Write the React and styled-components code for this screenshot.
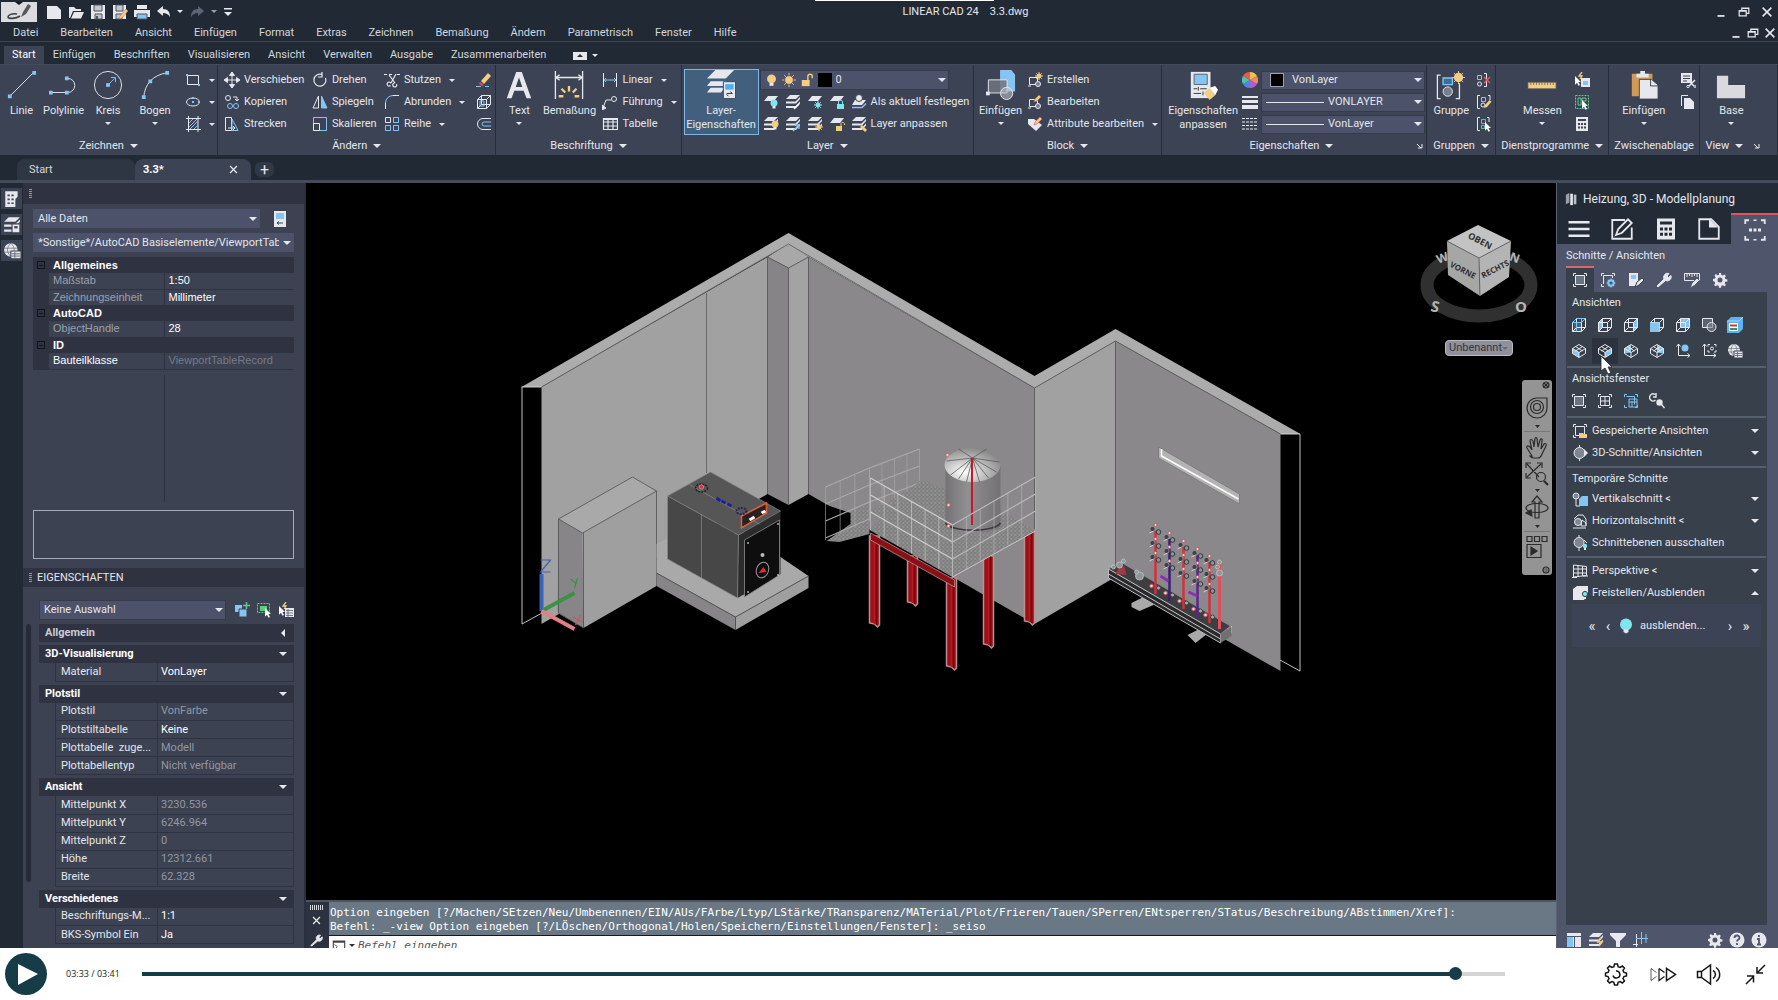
import React from "react"
import styled, {createGlobalStyle} from "styled-components"

const
  W = "#e6e8ed",
  B = "#86c5f2",
  Y = "#f3cd82",
  C = "#7fe6ee",
  G = "#63c98a",
  R = "#e0525f"

const Global = createGlobalStyle`
  * { box-sizing: border-box; }
  body {
    margin: 0;
    background: #212a34;
    color: #e3e6ec;
    font: 11px/14px Roboto, "Open Sans", sans-serif;
  }
  button, select, input { font: inherit; color: inherit; margin: 0; }
  button { background: none; border: 0; padding: 0; white-space: nowrap; }
  a { color: inherit; text-decoration: none; }
  svg { display: block; flex: none; }
`

/* ---------- icons, all on a 16 grid ---------- */

const
  layers = <path d="M5 1h10l-4 4H1zM1 7.500h9.500L15 3v2l-4 4.500H1zM1 12h9.500L15 7.500v2L11 14H1z" fill={W} stroke="none" />,
  sheet = <path d="M5 2h10l-4 5H1z" fill={W} stroke="none" />,
  bulb = (x, y, c) => <g stroke="none"><circle cx={x} cy={y} r="3.500" fill={c} /><path d={`M${x - 1.500} ${y + 3}h3v2.500h-3z`} fill={W} /></g>,
  sun = (x, y, r, c) => <g stroke={c}><circle cx={x} cy={y} r={r * .5} fill={c} /><path d={`M${x} ${y - r}v${2 * r}M${x - r} ${y}h${2 * r}M${x - r * .7} ${y - r * .7}l${r * 1.4} ${r * 1.4}M${x - r * .7} ${y + r * .7}l${r * 1.4} ${-r * 1.4}`} /></g>,
  pointer = (x, y) => <path d={`M${x} ${y}l6 6h-2.500l1.500 3-1.500.700-1.500-3-2 2z`} fill="#fff" stroke="none" />,
  pencil = <path d="M8 14l1-3 4.500-5 2 1.800L11 13z" fill={Y} stroke="none" />,
  cube = "M1.500 5.500h9v9h-9zM5.500 1.500h9v9M1.500 5.500l4-4M10.500 5.500l4-4M10.500 14.500l4-4M5.500 1.500v9h9M5.500 10.500l-4 4",
  iso = "M8 1.500l6.500 4v5L8 14.500l-6.500-4v-5zM1.500 5.500L8 9.500l6.500-4M8 9.500v5M4.500 3.500l7 4.500M11.500 3.500l-7 4.500",
  frame = "M1.500 4v-2.500H4M12 1.500h2.500V4M14.500 12v2.500H12M4 14.500H1.500V12",
  gear = <path d="M7 1h2l.4 2 1.400.6 1.700-1.100 1.400 1.400-1.100 1.700.6 1.400 2 .4v2l-2 .4-.6 1.400 1.100 1.700-1.400 1.400-1.700-1.100-1.400.6-.4 2H7l-.4-2-1.400-.6-1.700 1.100-1.400-1.400 1.100-1.700-.6-1.400L1 9V7l2-.4.6-1.400-1.100-1.700 1.400-1.400 1.700 1.100L7 3zM8 5.500a2.500 2.500 0 100 5 2.500 2.500 0 000-5z" fill={W} fillRule="evenodd" stroke="none" />

const art = {
  // quick access
  fileNew: <path d="M1 2h10l4 4v9H1z" fill={W} stroke="none" />,
  open: <path d="M1 3h5l2 2h5v2H5l-3 7H1zM6 8h10l-3 6.500H3z" fill={W} stroke="none" />,
  save: <><path d="M1 1h14v14H1z" fill={W} stroke="none" /><path d="M4 1h8v6H4zM5 10h7v5H5z" fill="#c3c6cd" stroke="#4b5361" /><path d="M6 12h2v3H6z" fill="#4b5361" stroke="none" /></>,
  saveAs: <><path d="M1 1h13v14H1z" fill={W} stroke="none" /><path d="M4 1h7v6H4zM4 10h6v5H4z" fill="#c3c6cd" stroke="#4b5361" /><path d="M7 15l1-3 6-7 2 2-6 7z" fill={Y} stroke={R} strokeWidth=".5" /></>,
  print: <><path d="M3 1h10v4H3zM0 6h16v7H0z" fill={W} stroke="none" /><path d="M3 10h10v5H3z" fill={B} stroke="#4b5361" /></>,
  undo: <path d="M7 2v3c5 0 7 3 7 8-2-3-4-4-7-4v3L1 7z" fill={W} stroke="none" />,
  redo: <path d="M9 2v3c-5 0-7 3-7 8 2-3 4-4 7-4v3l6-5z" fill="#5d6573" stroke="none" />,
  more: <path d="M4 4h8v1.500H4zM4 8h8l-4 4z" fill={W} stroke="none" />,
  min: <path d="M4 12.500h8" strokeWidth="2" />,
  restore: <path d="M5.500 6V3.500h8v6H11M2.500 6.500h8v6h-8zM5.500 4h8M2.500 7h8" strokeWidth="1.400" />,
  close: <path d="M3 3l10 10M13 3L3 13" strokeWidth="1.800" />,
  // draw
  rect: <><path d="M2.500 3.500h11v9h-11z" /><path d="M1 2h2v2H1zM13 12h2v2h-2z" fill={B} stroke="none" /></>,
  ellipse: <><ellipse cx="8" cy="8" rx="6.500" ry="4" /><path d="M7 7h2v2H7zM7 3h2v2H7zM13 7h2v2h-2z" fill={B} stroke="none" /></>,
  hatch: <><path d="M3.500 0v16M13 0v16M1 2.500h15M1 13.500h15" /><path d="M4 7l4-4M4 11l8-8M5 13l8-8M9 13l4-4" stroke={B} /></>,
  // modify
  move: <path d="M8 1v14M1 8h14M8 0L5.500 3.500h5zM8 16l-2.500-3.500h5zM0 8l3.500-2.500v5zM16 8l-3.500-2.500v5z" fill={W} />,
  copy: <><circle cx="4" cy="4" r="2.500" /><path d="M9 3h4v3M11 5l2 2 2-2" /><circle cx="6" cy="12" r="2.500" stroke={B} /><circle cx="12" cy="12" r="2.500" stroke={B} /></>,
  stretch: <><path d="M1.500 1.500h6v13h-6zM4 12h7M9 10l2 2-2 2" /><path d="M8 3l6 11.500H8z" stroke={B} /></>,
  rotate: <path d="M10 2.500A6 6 0 1013.500 6M10 0v5h-4" strokeWidth="1.200" />,
  mirror: <><path d="M6.500 2v12H1z" /><path d="M9.500 2v12H15z" fill={B} stroke={B} /></>,
  scale: <><path d="M1.500 1.500h13v13h-13z" stroke={B} /><path d="M1.500 7.500h6v7h-6z" /></>,
  trim: <path d="M0 2.500h3M5 2.500h3M13 2.500h3M5 3l6 8M12 2l-5 9M10.500 11a2 2 0 102 1M7 11.500a2 2 0 10-.5 2" strokeWidth="1.200" />,
  fillet: <><path d="M1.500 15V9M9 1.500h6" /><path d="M1.500 9A7.500 7.500 0 019 1.500" stroke={B} /></>,
  array: <><path d="M1.500 1.500h5v5h-5z" /><path d="M9.500 1.500h5v5h-5zM1.500 9.500h5v5h-5zM9.500 9.500h5v5h-5z" stroke={B} /></>,
  erase: <><path d="M5 9l7-8 3 3-7 8z" fill={Y} stroke="none" /><path d="M4 10l4 3-2 1-3-2z" fill={R} stroke="none" /><path d="M0 14.500h5M9 14.500h4" stroke={B} /></>,
  explode: <><path d={cube} /><path d="M4 7h4v5H4z" stroke={B} /></>,
  offset: <><path d="M15 2.500H7a5.500 5.500 0 000 11h8" /><path d="M15 6H8a2 2 0 000 4h7" stroke={B} /></>,
  // annotate
  linear: <><path d="M1.500 1v14M14.500 1v14" /><path d="M2 8h12M4 6L2 8l2 2M12 6l2 2-2 2" stroke={B} /></>,
  leader: <><path d="M1 14l3-8h5" /><circle cx="12" cy="5" r="2.500" /><path d="M0 16v-5l4 3z" fill={W} /></>,
  table: <path d="M1.500 2.500h14v11h-14zM1.500 6h14M1.500 10h14M6 3v11M11 3v11M2 3.500h13" strokeWidth="1.200" />,
  // layers
  bulb: <g stroke="none"><circle cx="8" cy="6" r="5.500" fill={Y} /><path d="M5.500 11h5v3.500h-5z" fill={W} /></g>,
  sun: <>{sun(8, 8, 8, Y)}<circle cx="8" cy="8" r="5" fill={Y} stroke="#4b5269" /></>,
  unlock: <><path d="M2 8h9v7H2z" fill={Y} stroke="none" /><path d="M9 8V4a2.500 2.500 0 015 0v2" stroke={Y} strokeWidth="1.600" /></>,
  layOff: <>{sheet}{bulb(11, 9, C)}</>,
  layIso: <>{layers}<path d="M9 15l5-5" stroke="#fff" strokeWidth="1.500" /></>,
  layFreeze: <>{sheet}{sun(11, 11, 4, C)}</>,
  layLock: <>{sheet}<path d="M8 10h7v5H8z" fill={C} stroke="none" /><path d="M9.500 10V8a2 2 0 014 0v2" stroke={C} /></>,
  layCurrent: <><path d="M4 6h11l-4 5H1z" fill={W} stroke="none" /><path d="M1 13.500h10l4-4" stroke={B} strokeWidth="1.500" /><circle cx="8" cy="4" r="3.500" fill={W} stroke="#3c4354" /></>,
  layOn: <>{layers}{bulb(12, 8, Y)}</>,
  layUniso: <>{layers}<path d="M8 15l6-6M10 9h4v4" stroke={B} strokeWidth="1.300" /></>,
  layThaw: <>{layers}{sun(12, 11, 4, Y)}</>,
  layUnlock: <>{sheet}<path d="M7 10h6v5H7z" fill={Y} stroke="none" /><path d="M12 10V7.500a2 2 0 013.500 0V9" stroke={Y} /></>,
  layMatch: <>{layers}<path d="M9 11l2-2 5 5-2 2z" fill={Y} stroke="none" /></>,
  // blocks
  blkNew: <><path d="M2.500 5.500h8v7h-8zM1 14h3" /><circle cx="11" cy="12" r="2.500" fill="#777f8d" />{sun(12, 4, 4, Y)}</>,
  blkEdit: <><path d="M2.500 5.500h8v7h-8zM1 14h3" /><circle cx="11" cy="12" r="2.500" fill="#777f8d" /><path d="M7 8l1-3 4-4 2 2-4 4z" fill={Y} stroke={R} strokeWidth=".6" /></>,
  attEdit: <><path d="M1 3h6l8 6-6 6-8-7z" fill={W} stroke="none" /><path d="M7 9l1-3 5-5 2 2-5 5z" fill={Y} stroke={R} strokeWidth=".6" /></>,
  weight: <path d="M0 2h16v2H0zM0 6h16v3H0zM0 11h16v4H0z" fill={W} stroke="none" />,
  linetype: <path d="M0 2.500h16M0 6h16M0 9.500h16M0 13h16" strokeDasharray="3 1" />,
  wheel: <g stroke="none"><path d="M8 8V0a8 8 0 017 4z" fill="#f2c14e" /><path d="M8 8l7-4a8 8 0 010 8z" fill="#f08a5a" /><path d="M8 8l7 4a8 8 0 01-7 4z" fill="#b45ad6" /><path d="M8 8v8a8 8 0 01-7-4z" fill="#4f83e6" /><path d="M8 8l-7 4a8 8 0 010-8z" fill="#4bc6a4" /><path d="M8 8L1 4a8 8 0 017-4z" fill="#e9594f" /></g>,
  // groups, utilities, clipboard
  ungroup: <><path d="M1.500 3.500h4v4h-4z" stroke={B} /><circle cx="3.500" cy="12" r="2" /><path d="M8 1.500h2.500v13H8" /><path d="M8 5l6 6M14 5l-6 6" stroke={R} strokeWidth="1.500" /></>,
  groupEdit: <><path d="M4 1.500H1.500v13H4M12 1.500h2V6" /><path d="M5.500 3.500h4v4h-4z" stroke={B} /><circle cx="7" cy="11" r="2" />{pencil}</>,
  groupSel: <><path d="M4 1.500H1.500v13H4M11 1.500h2V6" /><path d="M5.500 3.500h4v4h-4zM5.500 9.500h3v3h-3z" stroke={G} />{pointer(9, 6)}</>,
  quickSel: <><path d="M7 6h9v9H7z" fill={W} stroke="none" /><path d="M9 9h5v4H9z" fill={B} stroke="none" /><path d="M8 0L5 4h3L6 7" stroke={Y} strokeWidth="1.300" />{pointer(1, 4)}</>,
  quickProps: <><path d="M7 6h9v9H7z" fill={W} stroke="none" /><path d="M8 8.500h7M8 11h7M8 13.500h7M10 7v8" stroke="#59606d" strokeWidth=".8" /><path d="M8 0L5 4h3L6 7" stroke={Y} strokeWidth="1.300" />{pointer(1, 4)}</>,
  selAll: <><path d="M1.500 1.500h13v13h-13z" stroke={G} strokeDasharray="2 1" /><path d="M4 4h3v7h-3zM8 4h4v3h-4z" stroke={G} />{pointer(8, 6)}</>,
  calc: <path d="M2 1h12v14H2zM4 3v2h8V3zM4 7v2h2V7zM7 7v2h2V7zM10 7v2h2V7zM4 10.500v2h2v-2zM7 10.500v2h2v-2zM10 10.500v2h2v-2z" fill={W} fillRule="evenodd" stroke="none" />,
  cut: <><path d="M1 1h11v10H1z" fill={W} stroke="none" /><path d="M3 4h7M3 6.500h7M3 9h4" stroke="#3c4354" /><path d="M8 8l6 6M15 8l-6 6" strokeWidth="1.500" /><circle cx="8" cy="14.500" r="1.200" /><circle cx="15" cy="14.500" r="1" /></>,
  copyClip: <><path d="M1.500 12V1.500H8" /><path d="M4 4h6l4 4v7H4z" fill={W} stroke="none" /></>,
  // palettes
  building: <path d="M2 1h11v5l-2 2v7H2zM4 4v1.500h2V4zM7.500 4v1.500h2V4zM4 7.500V9h2V7.500zM7.500 7.500V9h2V7.500zM4 11v1.500h2V11zM7.500 11v1.500h2V11z" fill={W} fillRule="evenodd" stroke="none" />,
  layProps: <>{layers}<path d="M8 7h7v8H8z" fill={W} stroke="#3c4354" /><path d="M10 9h3v2h-3z" fill="#3c4354" stroke="none" /></>,
  globeProps: <><circle cx="7" cy="7" r="6" fill={W} stroke="none" /><path d="M1 5.500h12M1 9h12M7 1c-4 4-4 8 0 12M7 1c4 4 4 8 0 12" stroke="#59606d" strokeWidth=".6" /><path d="M7 8h9v7H7z" fill={W} stroke="#3c4354" /><path d="M8 10.500h7M8 12.500h7M10.500 9v5" stroke="#59606d" strokeWidth=".8" /></>,
  device: <><path d="M2 0h12v16H2z" fill={W} stroke="none" /><path d="M4 2h8v6H4z" fill={B} stroke="none" /><path d="M5 12h6M7 10.500L5 12l2 1.500" stroke="#3c4354" /></>,
  addSel: <><path d="M1 3h7v7H1z" fill={B} stroke="none" /><path d="M5 7h8v8H5z" fill={B} stroke="#3c4354" /><path d="M12.500 0v7M9 3.500h7" stroke={G} strokeWidth="1.500" /></>,
  pickSel: <><path d="M1.500 1.500h12v9h-12z" stroke={G} strokeDasharray="2 1" /><path d="M4 4h7v5H4z" fill={G} stroke="none" />{pointer(9, 6)}</>,
  // modelling palette
  burger: <path d="M1 3.500h14M1 8h14M1 12.500h14" strokeWidth="1.700" />,
  edit: <><path d="M10 2H1.500v12.500h13V7" strokeWidth="1.200" /><path d="M4 12l1.500-4L12 1.500l2.500 2.500L8 10.500z" strokeWidth="1.200" /></>,
  page: <><path d="M1.500 1.500h8l5 5v8h-13z" strokeWidth="1.200" /><path d="M8 1v6h6z" fill={W} stroke="none" /></>,
  dots: <><path d={frame} strokeWidth="1.200" /><path d="M7 1.500h2M7 14.500h2" /><path d="M4 7h2v2H4zM7 7h2v2H7zM10 7h2v2h-2z" fill={W} stroke="none" /></>,
  view: <><path d={frame} /><path d="M3.500 3.500h9v9h-9z" fill="#6a7380" /></>,
  viewGear: <><path d="M1.500 4v-2.500H4M12 1.500h2.500V4M4 14.500H1.500V12M3.500 12V3.500h9V6" /><circle cx="11" cy="11" r="2.800" stroke={B} strokeWidth="1.800" /><path d="M11 6.500v9M6.500 11h9M8 8l6 6M14 8l-6 6" stroke={B} strokeWidth="1.200" /><circle cx="11" cy="11" r="1.600" fill="#50566d" stroke="none" /></>,
  deviceEdit: <><path d="M1 1h9v13H1z" fill={W} stroke="none" /><path d="M3 3h5v4H3z" fill={B} stroke="none" /><path d="M7 15l2-5 5-4 2 2-5 5z" fill={W} stroke="#37404b" /></>,
  wrench: <path d="M2 15l-1-1 7-7a4 4 0 015-5.500l-2 2.500 1.500 1.500L15 3.500a4 4 0 01-5.500 5z" fill={W} stroke={W} />,
  ruler: <><path d="M.5 1.500h15v7H.500zM3 2v3M5.500 2v2M8 2v3M10.500 2v2M13 2v3" /><path d="M6 16l2-5 5-5 2.500 2.500-5 5z" fill={W} stroke="#50566d" /></>,
  gear,
  cubeTop: <><path d="M3 5.500h7v9H3z" fill={B} fillOpacity=".25" stroke="none" /><path d={cube} /><path d="M1.500 5.500h9l4-4h-9zM5.500 5.500v9M10.500 1.500v4" stroke={B} /></>,
  cubeLeft: <><path d="M1.500 5.500l4-4v9l-4 4z" fill={B} stroke="none" /><path d={cube} /></>,
  cubeRight: <><path d="M10.500 5.500l4-4v9l-4 4z" fill={B} stroke="none" /><path d={cube} /></>,
  cubeFront: <><path d={cube} /><path d="M1 5.500h9.500V15H1z" fill={B} stroke="none" /></>,
  cubeBack: <><path d="M5.500 1.500h9v9h-9z" fill={B} stroke="none" /><path d={cube} /></>,
  overlap: <><path d="M1.500 1.500h10v9h-10z" fill="#5b6572" /><circle cx="10.500" cy="10" r="4.500" fill="#7d8692" fillOpacity=".6" /></>,
  server: <><path d="M0 4l4-4h12v12l-4 4H0z" fill="#5cb3f0" stroke="none" /><path d="M0 4h12l4-4" stroke="#c9e6fb" strokeWidth=".7" /><path d="M2 6h9v8H2z" fill="#fff" stroke="none" /><path d="M3 7.500h7v2H3z" fill="#cf3345" stroke="none" /><path d="M3 11h7v2H3z" fill="#2f9b57" stroke="none" /></>,
  isoSW: <><path d="M1.500 5.500L8 9.500v5l-6.500-4z" fill={B} stroke="none" /><path d={iso} /></>,
  isoSE: <><path d="M8 9.500l6.500-4v5L8 14.500z" fill={B} stroke="none" /><path d={iso} /></>,
  isoNE: <><path d="M1.500 5.500L8 1.500v8l-6.500 1z" fill={B} stroke="none" /><path d={iso} /></>,
  isoNW: <><path d="M8 1.500l6.500 4v5L8 9.500z" fill={B} stroke="none" /><path d={iso} /></>,
  axisGlobe: <><path d="M3.500 1v11.500H15M1.500 3.500L3.500 1l2 2.500M12.500 10.500l2.500 2-2.500 2" /><circle cx="10" cy="5" r="3.500" fill={B} stroke="none" /></>,
  axisView: <><path d="M3.500 1v11.500H15M1.500 3.500L3.500 1l2 2.500M12.500 10.500l2.500 2-2.500 2M7 3.500V1.500h2M13 1.500h2v2M15 7v2h-2M9 9H7V7" /><circle cx="11" cy="5.500" r="1.500" /></>,
  viewGrid: <><path d={frame} /><path d="M3.500 3.500h9v9h-9zM3.500 8h9M8 3.500v9" /></>,
  viewBlue: <><path d={frame} stroke={B} /><path d="M3.500 3.500h8v8M6 6h8v8H6zM6 9h8M9 8v6" stroke={B} /></>,
  orbit: <><path d="M6 1.500a3.500 3.500 0 10.500 5.500M7 0v4H4" strokeWidth="1.400" /><circle cx="10.500" cy="9.500" r="3.200" fill={W} stroke="none" /><path d="M12 11l3.500 4" strokeWidth="1.400" /></>,
  saved: <><path d={frame} /><path d="M3.500 3.500h9v9h-9z" /><path d="M7 10h4l1 1h3l-1 4H7z" fill={Y} stroke="none" /></>,
  section: <><path d="M7.500 0v16" /><circle cx="7.500" cy="8" r="5.500" fill="#7d8692" /><path d="M12 4l4 4-4 4z" fill={W} stroke="none" /></>,
  vsec: <><path d="M4 8v7h4" /><path d="M7 8l3-3h6v10H7z" fill={B} stroke="none" /><circle cx="4" cy="5" r="3" fill="#7d8692" /></>,
  hsec: <><path d="M2 6l4-4h5l3 4v6M1 15h13" /><circle cx="6" cy="9" r="3.500" fill="#7d8692" /><path d="M10 7l4 3v3H9z" /></>,
  secOff: <><circle cx="7" cy="7.500" r="5" fill="#7d8692" /><path d="M7 0v2M7 13v3M12 5l3 3" /><circle cx="13" cy="11" r="2.200" fill={C} stroke="none" /><path d="M12 13h2v2h-2z" fill={W} stroke="none" /></>,
  persp: <path d="M1.500 2l13 1.500v9L1.500 14zM0 14.500h5M11 13h5M6 2.500v11M10.500 3v10M1.500 6h13M1.500 10h13" />,
  isolate: <><path d="M1 4l4-3h11v8l-4 6H1z" fill={W} stroke="none" /><circle cx="13" cy="9" r="2.600" fill={C} stroke="#37404b" /><path d="M12 12h2v2h-2z" fill={W} stroke="none" /></>,
  cyanBulb: <g stroke="none"><circle cx="8" cy="6.500" r="6" fill={C} /><path d="M5.500 11.500h5V14l-2.500 1.500L5.500 14z" fill={W} /></g>,
  panes: <><path d="M1 1h14v14H1z" fill={W} stroke="none" /><path d="M1 4.500h14M8.500 5v10" stroke="#50566d" /><path d="M1 5h6v10H1z" fill={B} stroke="none" /></>,
  layFlash: <>{layers}<path d="M13 6l-3 4h4l-3 4" stroke={Y} strokeWidth="1.500" /></>,
  funnel: <path d="M0 1h16v2l-6 6v6H6V9L0 3z" fill={W} stroke="none" />,
  grid: <><path d="M4.500 2v13M1 12.500h5" /><path d="M4 6.500h12M9.500 0v12M14 2v9" stroke={B} /></>,
  help: <><circle cx="8" cy="8" r="7.500" fill={W} stroke="none" /><path d="M5.500 6a2.500 2.500 0 115 0c0 1.500-2.500 1.500-2.500 3.500M8 11v2" stroke="#50566d" strokeWidth="1.800" /></>,
  info: <><circle cx="8" cy="8" r="7.500" fill={W} stroke="none" /><path d="M8 3v2M6 7h2v5M6 12.500h4" stroke="#50566d" strokeWidth="1.800" /></>,
  radiator: <><path d="M1 3l4-2v11l-4 2z" fill="#9aa1ad" stroke="none" /><path d="M6 2h3v13H6z" fill={W} stroke="none" /><path d="M10 3h3v11h-3z" fill="#b9bec8" stroke="none" /></>,
  terminal: <><path d="M1.500 2.500h13v12h-13zM1.500 3.500h13" stroke="#444" strokeWidth="1.300" /><path d="M3 6l3 3-3 3M8 12h4" stroke="#444" /></>,
}

const Icon = ({name, size = 16}) =>
  <svg width={size} height={size} viewBox="0 0 16 16" fill="none" stroke={W} aria-hidden="true">{art[name]}</svg>

const bigArt = {
  line: <><path d="M3 28L29 2" /><path d="M1 26h4v4H1zM27 1h4v4h-4z" fill={B} stroke="none" /></>,
  polyline: <><path d="M2 24h18a7.500 7.500 0 000-15" /><path d="M0 22h4v4H0zM17 22h4v4h-4zM17 7h4v4h-4z" fill={B} stroke="none" /></>,
  circle: <><circle cx="16" cy="16" r="14.500" /><path d="M16 16l7-7M19 8h5v5" stroke={B} /><path d="M14 14h4v4h-4z" fill={B} stroke="none" /></>,
  arc: <><path d="M4 29C5 15 14 5 29 3" /><path d="M2 27h4v4H2zM9 10h4v4H9zM27 1h4v4h-4z" fill={B} stroke="none" /></>,
  text: <path d="M13 2h6l10 28h-5l-3-8H11l-3 8H3zM12.500 18h7L16 8z" fill={W} fillRule="evenodd" stroke="none" />,
  dim: <><path d="M1.500 1v30M30.500 1v30M2 8h28M6 5L2 8l4 3M26 5l4 3-4 3" strokeWidth="1.400" /><path d="M5 28h5M27 28h-5M8 20l4 4M24 20l-4 4M16 17v6" stroke={Y} strokeWidth="2.500" /></>,
  layerProps: <><path d="M10 0h20l-9 9H1zM5 12l-4 5h17l4-5zM5 19l-4 5h15l4-5z" fill={W} stroke="none" /><path d="M18.500 12.500h13v18h-13z" fill={W} stroke="#3c4354" /><path d="M20.500 15h9v6h-9z" fill="#4fb0ee" stroke="none" /><path d="M22 25h6M26 23l2 2M24 28l-2-2" stroke="#222" /></>,
  insert: <><path d="M15 0h12l4 5v18H15z" fill={B} stroke="none" /><path d="M2.500 10.500h20v14h-20z" fill="#6e7480" fillOpacity=".85" /><circle cx="22" cy="25" r="6.500" fill="#b9bdc6" fillOpacity=".6" /><path d="M0 23h4v4H0z" fill={W} stroke="none" /></>,
  match: <><path d="M3 2h21v28H3z" fill={W} stroke="none" /><path d="M6.500 4.500h14v11h-14z" fill={B} stroke="#59606d" /><path d="M6 20h4M13 20h7M11 18v4M6 25h8M16 23v4" stroke="#333" /><path d="M17 24l7-5 5 8-6 5z" fill={Y} stroke="none" /><path d="M23 19l6-2 3 4-3 6z" fill="#fff" stroke="none" /></>,
  group: <><path d="M5 5.500H1.500v25H5M21 30.500h4V14" strokeWidth="1.400" /><path d="M7.500 8.500h10v7h-10z" stroke={B} fill="#3d6c94" strokeWidth="1.400" /><circle cx="12.500" cy="23" r="5" fill="#777f8d" />{sun(24, 8, 7, Y)}<circle cx="24" cy="8" r="5" fill={Y} stroke="none" /></>,
  measure: <path d="M1 13h30v7H1zM4 13v3M7 13v3M10 13v3M13 13v3M16 13v3M19 13v3M22 13v3M25 13v3M28 13v3" fill={Y} stroke="#5d5a55" strokeWidth=".8" />,
  paste: <><path d="M3 4h22v24H3z" fill="#d49a55" stroke="none" /><path d="M8 4h4V1h5v3h4v4H8z" fill={W} stroke="none" /><path d="M11 10h13l7 6v15H11z" fill={W} stroke="#3c4354" /><path d="M23 10v7h8" stroke="#3c4354" /></>,
  base: <path d="M1 6h12v10h18v14H1z" fill="#d9d9df" stroke="none" />,
}
const BigIcon = ({name}) =>
  <svg width="30" height="30" viewBox="0 0 32 32" fill="none" stroke={W} aria-hidden="true">{bigArt[name]}</svg>

/* ---------- shared parts ---------- */

const
  Shell = styled.div`
    min-height: 100vh;
    display: flex;
    flex-direction: column;
    overflow: hidden;
  `,
  Caret = styled.i`
    flex: none;
    width: 0;
    height: 0;
    border: ${p => p.$size || 3}px solid transparent;
    border-bottom-width: 0;
    border-top-color: ${p => p.$color || W};
    ${p => p.$up && `transform: rotate(180deg);`}
    ${p => p.$left && `transform: rotate(90deg);`}
  `,
  IconButton = styled.button`
    display: flex;
    align-items: center;
    justify-content: center;
    width: ${p => p.$w || 22}px;
    height: ${p => p.$h || 20}px;
  `,
  ComboBox = styled.label`
    display: flex;
    align-items: center;
    gap: 4px;
    min-width: 0;
    height: ${p => p.$h || 19}px;
    padding: 0 2px 0 4px;
    background: #4b5269;
    border: 1px solid ${p => p.$flat ? "#4b5269" : "#353b4b"};
    ${p => p.$grow && "flex: 1;"}
  `,
  Select = styled.select`
    appearance: none;
    flex: 1;
    min-width: 0;
    background: transparent;
    border: 0;
    padding: 0;
    outline: 0;
  `,
  Swatch = styled.span`
    flex: none;
    width: 14px;
    height: 14px;
    background: #000;
    border: 1px solid ${p => p.$ring || "#000"};
  `,
  Stroke = styled.span`
    flex: none;
    width: 58px;
    height: 1px;
    background: ${W};
  `

const Combo = ({label, value, children, ...rest}) => <ComboBox {...rest}>
  {children}
  <Select aria-label={label} defaultValue={value}><option>{value}</option></Select>
  <Caret $size={4} />
</ComboBox>

/* ---------- title, menu, tabs ---------- */

const
  TitleBar = styled.header`
    display: flex;
    align-items: center;
    height: 23px;
    background: linear-gradient(#fff, #fff) 51% 0 / 179px 1px no-repeat #212a34;
  `,
  Quick = styled.div`
    display: flex;
    align-items: center;
    width: 238px;
  `,
  Logo = styled.svg`
    margin: 0 6px 0 1px;
    background: #dcdcdf;
  `,
  Title = styled.h1`
    flex: 1;
    margin: 0;
    padding-right: 16px;
    font-size: 11px;
    font-weight: 400;
    text-align: center;
    white-space: pre;
  `,
  Controls = styled.div`
    display: flex;
    margin-left: auto;
  `,
  MenuBar = styled.nav`
    display: flex;
    align-items: center;
    gap: 22px;
    height: 19px;
    padding: 1px 0 0 13px;
    border-bottom: 1px solid #3b4450;
    color: #d3d6dd;
  `,
  Tabs = styled.nav`
    display: flex;
    align-items: flex-end;
    height: 22px;
    padding-left: 4px;
    color: #d3d6dd;
  `,
  Tab = styled.a`
    padding: 2px 8px;
    margin-right: ${p => p.$on ? 1 : 2}px;
    ${p => p.$on && "background: #3c4354; color: #fff;"}
  `,
  Toggle = styled.button`
    display: flex;
    align-items: center;
    gap: 5px;
    height: 17px;
    margin-left: 17px;
    & > span {
      display: flex;
      align-items: center;
      justify-content: center;
      width: 14px;
      height: 8px;
      background: ${W};
    }
  `,
  Docs = styled.nav`
    display: flex;
    align-items: flex-end;
    height: 25px;
    padding-left: 17px;
  `,
  Doc = styled.div`
    display: flex;
    align-items: center;
    justify-content: space-between;
    width: ${p => p.$on ? 116 : 118}px;
    height: 21px;
    padding: 0 ${p => p.$on ? 12 : 0}px 0 ${p => p.$on ? 8 : 12}px;
    border-radius: 8px 8px 0 0;
    background: ${p => p.$on ? "#3c4354" : "#2e3643"};
    color: ${p => p.$on ? "#fff" : "#d3d6dd"};
    font-weight: ${p => p.$on ? 700 : 400};
  `,
  NewDoc = styled.button`
    width: 19px;
    height: 15px;
    margin: 0 0 3px 4px;
    border-radius: 6px;
    background: #303846;
    font-size: 16px;
    line-height: 15px;
  `

const WindowControls = ({w}) => <Controls>
  <IconButton $w={w} aria-label="Minimieren"><Icon name="min" size={14} /></IconButton>
  <IconButton $w={w} aria-label="Wiederherstellen"><Icon name="restore" size={14} /></IconButton>
  <IconButton $w={w} aria-label="Schließen"><Icon name="close" size={14} /></IconButton>
</Controls>

const Top = () => <>
  <TitleBar>
    <Quick>
      <Logo width="36" height="20" viewBox="0 0 36 20" fill="none" stroke="#3c3f45">
        <path d="M14 0l4 3 4-3z" fill="#15191f" stroke="none" />
        <path d="M20 15l2-5 5-8 3 2-5 8z" fill="#55585f" stroke="none" />
        <path d="M16 12c-5-1-9 1-9 3s8 2 12-1" strokeWidth="1.600" />
      </Logo>
      {[["fileNew", "Neu"], ["open", "Öffnen"], ["save", "Speichern"], ["saveAs", "Speichern unter"], ["print", "Plotten"], ["undo", "Zurück"]].map(([i, l]) =>
        <IconButton key={i} aria-label={l}><Icon name={i} /></IconButton>)}
      <IconButton $w={10} aria-label="Zurück Liste"><Caret /></IconButton>
      <IconButton $w={24} aria-label="Wiederherstellen"><Icon name="redo" /></IconButton>
      <IconButton $w={10} aria-label="Wiederherstellen Liste"><Caret $color="#9aa1ad" /></IconButton>
      <IconButton $w={18} aria-label="Anpassen"><Icon name="more" /></IconButton>
    </Quick>
    <Title>{"LINEAR CAD 24    3.3.dwg"}</Title>
    <WindowControls w={23} />
  </TitleBar>
  <MenuBar>
    {["Datei", "Bearbeiten", "Ansicht", "Einfügen", "Format", "Extras", "Zeichnen", "Bemaßung", "Ändern", "Parametrisch", "Fenster", "Hilfe"].map(m =>
      <a key={m} href="#menu">{m}</a>)}
    <WindowControls w={17} />
  </MenuBar>
  <Tabs>
    {["Start", "Einfügen", "Beschriften", "Visualisieren", "Ansicht", "Verwalten", "Ausgabe", "Zusammenarbeiten"].map((t, i) =>
      <Tab key={t} href="#tab" $on={i === 0}>{t}</Tab>)}
    <Toggle aria-label="Multifunktionsleiste"><span><Caret $up $color="#212a34" /></span><Caret /></Toggle>
  </Tabs>
</>

/* ---------- ribbon ---------- */

const
  Ribbon = styled.section`
    display: flex;
    height: 91px;
    background: #3c4354;
    border-top: 1px solid #434b5c;
  `,
  Panel = styled.div`
    flex: ${p => p.$w} 1 0;
    min-width: 0;
    display: flex;
    flex-direction: column;
    border-right: 1px solid #272e3b;
  `,
  Body = styled.div`
    flex: 1;
    display: flex;
    padding: 4px 0 0 ${p => p.$pad || 4}px;
  `,
  PanelTitle = styled.button`
    display: flex;
    align-items: center;
    justify-content: ${p => p.$start ? "flex-start" : "center"};
    gap: 6px;
    height: 18px;
    padding: 0 5px;
  `,
  Big = styled.button`
    display: flex;
    flex-direction: column;
    align-items: center;
    gap: 4px;
    width: ${p => p.$w}px;
    height: 66px;
    padding-top: 1px;
    ${p => p.$on && "background: #42607e; outline: 1px solid #80b6e2; outline-offset: -1px;"}
  `,
  Label = styled.span`
    line-height: 14px;
    white-space: pre;
  `,
  Columns = styled.div`
    display: grid;
    grid-template-columns: ${p => p.$cols || "auto"};
    grid-auto-rows: 22px;
    align-content: start;
    padding-left: ${p => p.$pad || 0}px;
  `,
  Tool = styled.button`
    display: flex;
    align-items: center;
    gap: 4px;
    & > ${Caret} { margin-left: 4px; }
  `,
  Row = styled.div`
    display: flex;
    align-items: center;
    gap: 6px;
    padding-left: ${p => p.$pad || 0}px;
  `,
  Stack = styled.div`
    flex: 1;
    min-width: 0;
    display: grid;
    grid-auto-rows: 22px;
    align-content: start;
    align-items: center;
    padding: 0 1px;
  `,
  LayerPick = styled(Row)`
    padding-right: 23px;
  `,
  Property = styled.div`
    display: flex;
    align-items: center;
    gap: 3px;
  `,
  Launcher = styled.svg`
    margin-left: ${p => p.$far ? "77px" : "4px"};
    margin-right: ${p => p.$far ? "-86px" : 0};
  `

const BigButton = ({icon, children, caret, ...rest}) => <Big {...rest}>
  <BigIcon name={icon} />
  <Label>{children}</Label>
  {caret && <Caret />}
</Big>

const ToolButton = ({icon, children, caret}) => <Tool aria-label={children ? undefined : icon}>
  <Icon name={icon} />
  {children}
  {caret && <Caret />}
</Tool>

const RibbonPanel = ({w, pad, title, caret = true, launcher, start, children}) => <Panel $w={w}>
  <Body $pad={pad}>{children}</Body>
  <PanelTitle $start={start}>
    {title}{caret && <Caret $size={4} />}
    {launcher && <Launcher $far={!start} width="8" height="8" viewBox="0 0 8 8" fill="none" stroke={W}><path d="M1 2l4 4M6 2v4H2" /></Launcher>}
  </PanelTitle>
</Panel>

const RibbonBar = () => <Ribbon>
  <RibbonPanel w={218} title="Zeichnen">
    <BigButton icon="line" $w={35}>Linie</BigButton>
    <BigButton icon="polyline" $w={49}>Polylinie</BigButton>
    <BigButton icon="circle" $w={40} caret>Kreis</BigButton>
    <BigButton icon="arc" $w={54} caret>Bogen</BigButton>
    <Columns $pad={3}>
      <ToolButton icon="rect" caret />
      <ToolButton icon="ellipse" caret />
      <ToolButton icon="hatch" caret />
    </Columns>
  </RibbonPanel>
  <RibbonPanel w={279} pad={6} title="Ändern">
    <Columns $cols="88px 72px 92px 20px">
      <ToolButton icon="move">Verschieben</ToolButton>
      <ToolButton icon="rotate">Drehen</ToolButton>
      <ToolButton icon="trim" caret>Stutzen</ToolButton>
      <ToolButton icon="erase" />
      <ToolButton icon="copy">Kopieren</ToolButton>
      <ToolButton icon="mirror">Spiegeln</ToolButton>
      <ToolButton icon="fillet" caret>Abrunden</ToolButton>
      <ToolButton icon="explode" />
      <ToolButton icon="stretch">Strecken</ToolButton>
      <ToolButton icon="scale">Skalieren</ToolButton>
      <ToolButton icon="array" caret>Reihe</ToolButton>
      <ToolButton icon="offset" />
    </Columns>
  </RibbonPanel>
  <RibbonPanel w={185} pad={5} title="Beschriftung">
    <BigButton icon="text" $w={36} caret>Text</BigButton>
    <BigButton icon="dim" $w={64}>Bemaßung</BigButton>
    <Columns $pad={1}>
      <ToolButton icon="linear" caret>Linear</ToolButton>
      <ToolButton icon="leader" caret>Führung</ToolButton>
      <ToolButton icon="table">Tabelle</ToolButton>
    </Columns>
  </RibbonPanel>
  <RibbonPanel w={293} pad={2} title="Layer">
    <BigButton icon="layerProps" $w={75} $on>{"Layer-\nEigenschaften"}</BigButton>
    <Stack>
      <LayerPick>
        <Combo label="Layer" value="0" $h={20} $grow>
          <Icon name="bulb" size={13} /><Icon name="sun" size={14} /><Icon name="unlock" size={14} /><Swatch />
        </Combo>
      </LayerPick>
      <Row $pad={3}>
        {["layOff", "layIso", "layFreeze", "layLock"].map(i => <ToolButton key={i} icon={i} />)}
        <ToolButton icon="layCurrent">Als aktuell festlegen</ToolButton>
      </Row>
      <Row $pad={3}>
        {["layOn", "layUniso", "layThaw", "layUnlock"].map(i => <ToolButton key={i} icon={i} />)}
        <ToolButton icon="layMatch">Layer anpassen</ToolButton>
      </Row>
    </Stack>
  </RibbonPanel>
  <RibbonPanel w={188} pad={3} title="Block">
    <BigButton icon="insert" $w={47} caret>Einfügen</BigButton>
    <Columns $pad={3}>
      <ToolButton icon="blkNew">Erstellen</ToolButton>
      <ToolButton icon="blkEdit">Bearbeiten</ToolButton>
      <ToolButton icon="attEdit" caret>Attribute bearbeiten</ToolButton>
    </Columns>
  </RibbonPanel>
  <RibbonPanel w={265} pad={3} title="Eigenschaften" launcher>
    <BigButton icon="match" $w={76}>{"Eigenschaften\nanpassen"}</BigButton>
    <Stack>
      <Property>
        <Icon name="wheel" />
        <Combo label="Farbe" value="VonLayer" $grow><Row /><Swatch $ring="#9aa1ad" /><Row /></Combo>
      </Property>
      <Property>
        <Icon name="weight" />
        <Combo label="Linienstärke" value="VONLAYER" $grow><Stroke /></Combo>
      </Property>
      <Property>
        <Icon name="linetype" />
        <Combo label="Linientyp" value="VonLayer" $grow><Stroke /></Combo>
      </Property>
    </Stack>
  </RibbonPanel>
  <RibbonPanel w={69} pad={3} title="Gruppen">
    <BigButton icon="group" $w={43}>Gruppe</BigButton>
    <Columns $pad={3}>
      <ToolButton icon="ungroup" />
      <ToolButton icon="groupEdit" />
      <ToolButton icon="groupSel" />
    </Columns>
  </RibbonPanel>
  <RibbonPanel w={112} pad={14} title="Dienstprogramme">
    <BigButton icon="measure" $w={64} caret>Messen</BigButton>
    <Columns>
      <ToolButton icon="quickSel" />
      <ToolButton icon="selAll" />
      <ToolButton icon="calc" />
    </Columns>
  </RibbonPanel>
  <RibbonPanel w={91} pad={9} title="Zwischenablage" caret={false}>
    <BigButton icon="paste" $w={52} caret>Einfügen</BigButton>
    <Columns $pad={10}>
      <ToolButton icon="cut" />
      <ToolButton icon="copyClip" />
    </Columns>
  </RibbonPanel>
  <RibbonPanel w={77} pad={4} title="View" launcher start>
    <BigButton icon="base" $w={54} caret>Base</BigButton>
  </RibbonPanel>
</Ribbon>

/* ---------- left palettes ---------- */

const
  Main = styled.main`
    flex: 1;
    display: grid;
    grid-template-columns: 23px 283px minmax(0, 1fr) 222px;
    border-top: 3px solid #444b5c;
  `,
  Rail = styled.nav`
    display: flex;
    flex-direction: column;
    gap: 5px;
    padding: 5px 1px;
  `,
  RailButton = styled.button`
    display: flex;
    align-items: center;
    justify-content: center;
    width: 21px;
    height: 21px;
    background: #3c4354;
  `,
  Dock = styled.aside`
    display: flex;
    flex-direction: column;
    background: #3c4252;
    border-right: 2px solid #2a303d;
  `,
  PaletteHead = styled.h2`
    display: flex;
    align-items: center;
    gap: 5px;
    height: ${p => p.$h || 19}px;
    margin: 0;
    padding: 0 6px;
    background: #2f3341;
    font-size: 11px;
    font-weight: 400;
  `,
  Grip = styled.span`
    width: 3px;
    height: 9px;
    background: repeating-linear-gradient(#9097a5 0 1px, transparent 1px 2px);
  `,
  DataPalette = styled.section`
    flex: 1;
    display: flex;
    flex-direction: column;
    gap: 5px;
    padding: 5px 10px 9px 10px;
  `,
  DataTable = styled.table`
    width: 100%;
    border-collapse: collapse;
    table-layout: fixed;
    font: 11px/13px "Liberation Sans", Arial, sans-serif;
    & th, & td { padding: 0 4px; text-align: left; font-weight: 400; white-space: nowrap; }
    & td:first-child, & th:first-child { width: 16px; padding: 0 4px; background: #2f3341; }
  `,
  DataHead = styled.tr`
    height: 16px;
    background: #2f3341;
    & th { font-weight: 700; color: #fff; }
  `,
  DataRow = styled.tr`
    height: 16px;
    & th, & td { border-bottom: 1px solid #2f3341; }
    & th:nth-child(2) { width: 115px; color: ${p => p.$dim ? "#9ba0ad" : "#fff"}; }
    & td:last-child { border-left: 1px solid #2f3341; color: ${p => p.$dim ? "#fff" : "#747b89"}; }
  `,
  Fold = styled.button`
    display: flex;
    width: 8px;
    height: 8px;
    border: 1px solid #10151c;
    &::after { content: ""; width: 4px; height: 1px; margin: auto; background: #10151c; }
  `,
  Blank = styled.div`
    flex: 1;
    margin-left: 131px;
    border-left: 1px solid #2f3341;
  `,
  Preview = styled.div`
    height: 49px;
    margin-top: 3px;
    border: 1px solid #a3aabd;
  `,
  PropPalette = styled.section`
    display: grid;
    grid-template-columns: 5px minmax(0, 1fr);
    gap: 8px;
    padding: 13px 10px 4px 3px;
  `,
  Thumb = styled.div`
    height: 258px;
    margin-top: 24px;
    border-radius: 3px;
    background: #252b37;
  `,
  Picker = styled.div`
    display: flex;
    align-items: center;
    gap: 6px;
    margin-bottom: 4px;
    & > label { margin-right: 2px; }
  `,
  Groups = styled.div`
    display: grid;
    gap: 3px;
  `,
  GroupHead = styled.button`
    display: flex;
    align-items: center;
    justify-content: space-between;
    width: 100%;
    height: 18px;
    padding: 0 7px 0 6px;
    background: #2f3341;
    color: ${p => p.$closed ? "#c9ccd4" : "#fff"};
    font-weight: 700;
  `,
  PropTable = styled.table`
    width: calc(100% - 16px);
    margin-left: 16px;
    border-collapse: collapse;
    table-layout: fixed;
    & tr { height: 18px; }
    & th, & td { padding: 0 5px; border: 1px solid #2f3341; border-top: 0; text-align: left; font-weight: 400; white-space: pre; overflow: hidden; }
    & th { width: 102px; }
    & td { padding-left: 3px; }
  `,
  Value = styled.td`
    color: ${p => p.$dim ? "#9197a5" : "#fff"};
  `

const data = [
  ["Allgemeines", [["Maßstab", "1:50"], ["Zeichnungseinheit", "Millimeter"]]],
  ["AutoCAD", [["ObjectHandle", "28"]]],
  ["ID", [["Bauteilklasse", "ViewportTableRecord"]]],
]
// the third entry marks a read-only value
const props = [
  ["3D-Visualisierung", [["Material", "VonLayer"]]],
  ["Plotstil", [["Plotstil", "VonFarbe", 1], ["Plotstiltabelle", "Keine"], ["Plottabelle  zuge...", "Modell", 1], ["Plottabellentyp", "Nicht verfügbar", 1]]],
  ["Ansicht", [["Mittelpunkt X", "3230.536", 1], ["Mittelpunkt Y", "6246.964", 1], ["Mittelpunkt Z", "0", 1], ["Höhe", "12312.661", 1], ["Breite", "62.328", 1]]],
  ["Verschiedenes", [["Beschriftungs-M...", "1:1"], ["BKS-Symbol Ein", "Ja"]]],
]

const LeftDock = () => <>
  <Rail>
    {[["building", "Gebäude"], ["layProps", "Layer"], ["globeProps", "Daten"]].map(([i, l]) =>
      <RailButton key={i} aria-label={l}><Icon name={i} size={18} /></RailButton>)}
  </Rail>
  <Dock>
    <PaletteHead $h={21}><Grip /></PaletteHead>
    <DataPalette>
      <Row>
        <Combo label="Daten" value="Alle Daten" $h={19} $flat $grow />
        <IconButton $w={28} $h={18} aria-label="Ansicht wechseln"><Icon name="device" /></IconButton>
      </Row>
      <Combo label="Element" value="*Sonstige*/AutoCAD Basiselemente/ViewportTableRecord" $h={19} $flat />
      <DataTable>
        <colgroup><col width="16" /><col width="115" /><col /></colgroup>
        <tbody>
          {data.map(([name, rows]) => <React.Fragment key={name}>
            <DataHead><th><Fold aria-label={name} /></th><th colSpan="2">{name}</th></DataHead>
            {rows.map(([k, v]) => <DataRow key={k} $dim={name !== "ID"}><td /><th>{k}</th><td>{v}</td></DataRow>)}
          </React.Fragment>)}
        </tbody>
      </DataTable>
      <Blank />
      <Preview />
    </DataPalette>
    <PaletteHead><Grip />EIGENSCHAFTEN</PaletteHead>
    <PropPalette>
      <Thumb />
      <div>
        <Picker>
          <Combo label="Auswahl" value="Keine Auswahl" $h={20} $grow />
          <IconButton $w={16} aria-label="Hinzufügen"><Icon name="addSel" /></IconButton>
          <IconButton $w={16} aria-label="Objekte wählen"><Icon name="pickSel" /></IconButton>
          <IconButton $w={16} aria-label="Schnellauswahl"><Icon name="quickProps" /></IconButton>
        </Picker>
        <Groups>
          <GroupHead $closed>Allgemein<Caret $left $size={4} /></GroupHead>
          {props.map(([name, rows]) => <div key={name}>
            <GroupHead>{name}<Caret $size={4} /></GroupHead>
            <PropTable><tbody>
              {rows.map(([k, v, dim]) => <tr key={k}><th>{k}</th><Value $dim={dim}>{v}</Value></tr>)}
            </tbody></PropTable>
          </div>)}
        </Groups>
      </div>
    </PropPalette>
  </Dock>
</>

/* ---------- drawing area ---------- */

const
  Center = styled.section`
    min-width: 0;
    display: flex;
    flex-direction: column;
  `,
  Viewport = styled.div`
    position: relative;
    flex: 1;
    background: #000;
    & > svg:first-child { position: absolute; inset: 0; width: 100%; height: 100%; }
  `,
  CubeArea = styled.svg`
    position: absolute;
    top: 32px;
    right: 11px;
  `,
  UcsButton = styled.button`
    position: absolute;
    top: 157px;
    right: 43px;
    display: flex;
    align-items: center;
    justify-content: space-between;
    width: 68px;
    height: 16px;
    padding: 0 4px 0 3px;
    border: 1px solid #b9bac4;
    border-radius: 4px;
    background: #8f9099;
    color: #35353b;
  `,
  NavBar = styled.nav`
    position: absolute;
    top: 197px;
    right: 4px;
    width: 30px;
    height: 195px;
    border-radius: 3px;
    background: #949494;
  `,
  beam = "#9a1119"

const Post = ({x, y, h}) => <g>
  <path d={`M${x} ${y}h10v${h}l-2 2-3-3-5-1z`} fill={beam} stroke="#b98f90" strokeWidth="1.500" />
  <path d={`M${x + 5} ${y}v${h - 1}`} stroke="#c3141f" strokeWidth="1.500" />
  <path d={`M${x + 7} ${y}v${h}`} stroke="#6f0a10" strokeWidth="1.500" />
</g>

// rails run from (x1,y1) to (x2,y2), repeated downwards, with evenly spaced posts
const Railing = ({x1, y1, x2, y2, n, rails = 3, h = 54, c = "#c6c6c6"}) => <g stroke={c}>
  {Array.from({length: rails}, (_, i) => <path key={i} d={`M${x1} ${y1 + i * 17}L${x2} ${y2 + i * 17}`} strokeWidth="1.200" />)}
  {Array.from({length: n + 1}, (_, i) => {
    const t = i / n
    return <path key={"p" + i} d={`M${x1 + (x2 - x1) * t} ${y1 + (y2 - y1) * t}v${h}`} strokeOpacity=".6" />
  })}
</g>

const Riser = ({x, top, bottom, c}) => <g>
  <path d={`M${x} ${top + 6}V${bottom}`} stroke={c} strokeWidth="2.500" />
  {[0, 14, 28].map(o => <g key={o} strokeWidth=".8">
    <circle cx={x - 3} cy={top + o + 4} r="2.600" fill="#3e4146" stroke="#9a9a9a" />
    <circle cx={x + 3} cy={top + o + 7} r="2.300" fill="#8d9499" stroke="#222" />
    <circle cx={x} cy={top + o} r="1.600" fill="#ddd" stroke="#b5525c" />
    <path d={`M${x - 6} ${top + o + 8}l4-2`} stroke="#ddd" />
  </g>)}
  <circle cx={x - 4} cy={bottom - 8} r="1.800" fill="#ddd" stroke="#b5525c" />
  <circle cx={x + 3} cy={bottom - 6} r="2" fill="#aaa" stroke="#444" />
</g>

const Scene = () => <svg viewBox="305 183 1251 717" preserveAspectRatio="xMidYMid slice" fill="none" role="img" aria-label="Heizraum, isometrische Ansicht">
  <defs>
    <pattern id="grate" width="4" height="4" patternUnits="userSpaceOnUse">
      <rect width="4" height="4" fill="#838283" />
      <path d="M0 1h1M2 3h2" stroke="#a4a3a4" />
      <path d="M3 0h1M0 3h1" stroke="#727172" />
    </pattern>
    <linearGradient id="tank"><stop offset="0" stopColor="#747274" /><stop offset=".4" stopColor="#918f91" /><stop offset="1" stopColor="#737173" /></linearGradient>
    <radialGradient id="dome" cx=".35" cy=".7" r=".8"><stop offset="0" stopColor="#fff" /><stop offset=".5" stopColor="#bcbcbc" /><stop offset="1" stopColor="#7c7c7c" /></radialGradient>
  </defs>
  {/* walls */}
  <path d="M521 387L788 233l246 143 81-47 185 105h-20L1115 341l-81 47L808 257l-20-12-22 12L541 387z" fill="#acacac" />
  <path d="M541 387L767 257V494L541 624z" fill="#a1a1a1" />
  <path d="M808 257l226 131v236L808 494z" fill="#8a888b" />
  <path d="M1034 388l81-47v236l-81 47z" fill="#a1a1a1" />
  <path d="M1115 341l165 93v237l-165-94z" fill="#8a888b" />
  <path d="M767 257l21-13 20 13-20 11z" fill="#a8a8a8" />
  <path d="M767 257l21 11v237l-21-11z" fill="#868487" />
  <path d="M788 268l20-11v237l-20 11z" fill="#a3a3a3" />
  <path d="M541 387L788 244l246 144 81-47 165 93M706 293v180M767 257v237M788 268v237M808 257v237M767 257l21 11 20-11M1034 388v236M1115 341v236" stroke="#5b5b5d" strokeWidth=".8" />
  <path d="M521.500 387v237l20-11M521 387h20M1280 434h19.500v237l-20-11" stroke="#d6d6d6" strokeWidth=".9" />
  {/* wall slot */}
  <path d="M1158 447l81 47v10l-81-46z" fill="#b3b3b3" stroke="#777" strokeWidth=".8" />
  <path d="M1161 449v7l77 43" stroke="#fff" strokeWidth="1.500" />
  {/* cabinet */}
  <path d="M558 519l74-42 24 14-74 42z" fill="#a9a9a9" />
  <path d="M558 519l24 14 1 95-26-15z" fill="#878588" />
  <path d="M582 533l74-42v95l-73 42z" fill="#9f9f9f" />
  <path d="M558 519l74-42 24 14-74 42zM558 519v94l25 15v-95M656 491v95" stroke="#505052" strokeWidth=".8" />
  {/* plinth and boiler */}
  <path d="M656 544l12-6 75-6 65 44-73 41-79-44z" fill="#a9a9a9" />
  <path d="M656 573l79 44v13l-79-44z" fill="#878588" />
  <path d="M735 617l73-41v12l-73 42z" fill="#9f9f9f" />
  <path d="M656 573l79 44 73-41M735 617v13" stroke="#4b4b4d" strokeWidth=".8" />
  <path d="M667 496l43-24 70 39-42 24z" fill="#565657" />
  <path d="M667 496l71 39-1 63-70-39z" fill="#474748" />
  <path d="M738 535l42-24v63l-43 24z" fill="#2c2c2d" />
  <path d="M744 540l35-20v55l-35 22z" fill="#0e0e0f" stroke="#8d8d8d" strokeWidth=".8" />
  <path d="M667 496l71 39 42-24-70-39zM701 514v64M667 496v63l70 39 1-63M688 484l71 40" stroke="#8a8a8a" strokeWidth=".7" />
  <path d="M741 528v-12l25-13v10z" fill="#2a2020" stroke="#e0623f" strokeWidth="1.500" />
  <path d="M749 520l5-3M761 513l4-2" stroke="#fff" strokeWidth="3" />
  <ellipse cx="701" cy="488" rx="6" ry="4" stroke="#222" strokeDasharray="2 1" strokeWidth="1.500" />
  <circle cx="701" cy="487" r="2.200" fill="#e5283a" stroke="#d9b6b6" strokeWidth=".6" />
  <path d="M716 498l4 3M721 501l4 2M727 504l4 2" stroke="#1b1f9c" strokeWidth="3" />
  <ellipse cx="741" cy="511" rx="5" ry="3" stroke="#23274f" strokeDasharray="2 1" strokeWidth="2" />
  <ellipse cx="762" cy="570" rx="6" ry="8" transform="rotate(20 762 570)" stroke="#999" />
  <path d="M758 573l5-6 3 5z" fill="#e5283a" />
  <circle cx="762" cy="555" r="2" fill="#bbb" />
  <path d="M747 543h1M777 524h1M777 575h1M747 592h1" stroke="#fff" strokeWidth="2" />
  {/* stairs and platform */}
  <path d="M826 505l42 14-43 22z" fill="#000" />
  <path d="M850 512l19-10v32l-30 8-13-1 24-17z" fill="url(#grate)" />
  <Railing x1={825} y1={487} x2={869} y2={468} n={3} rails={4} h={53} c="#aaa9aa" />
  <Railing x1={869} y1={468} x2={919} y2={449} n={4} rails={3} h={50} c="#aaa9aa" />
  <Post x={907} y={556} h={48} />
  <Post x={983} y={556} h={90} />
  <Post x={1024} y={530} h={93} />
  <path d="M869 530l83 47 83-46-50-30-66-20z" fill="url(#grate)" />
  <path d="M869 512l56-32 20 12v70z" fill="url(#grate)" />
  <path d="M945 466v60a28 9 0 0055 0v-60z" fill="url(#tank)" />
  <path d="M945 523a28 9 0 0055 0" stroke="#3b3b3c" strokeWidth="1.500" />
  <ellipse cx="972" cy="465" rx="28" ry="17" fill="url(#dome)" />
  <path d="M972 458l-26 3M972 458l-22 17M972 458l-14 21M972 458l-6 24M972 458l7 24M972 458l16 20M972 458l24 14M972 458l27 4M972 458l14-9M972 458l-14-9" stroke="#4f4f50" strokeWidth=".7" />
  <path d="M971.500 458v67" stroke="#c9172c" strokeWidth="2" />
  <g fill="#f1d8d8" stroke={R} strokeWidth=".7"><circle cx="947" cy="455" r="1.600" /><circle cx="948" cy="505" r="1.600" /><circle cx="948" cy="526" r="1.600" /></g>
  <Post x={869} y={536} h={89} />
  <Post x={946} y={578} h={90} />
  <path d="M870 533l84 47v7l-84-47z" fill="#8a0f17" stroke="#b98f90" strokeWidth=".8" />
  <path d="M952 577l83-46" stroke="#c7c7c7" />
  <Railing x1={870} y1={478} x2={952} y2={525} n={6} h={52} c="#cfcfcf" />
  <Railing x1={952} y1={525} x2={1035} y2={477} n={6} h={52} c="#b9b9b9" />
  {/* manifold */}
  <path d="M1131 603l14-7 6 4 2 5-14 6-8-4zM1187 635l14-7 8 4-14 11z" fill="#a9a9a9" />
  <path d="M1108 569l12-7 110 64-10 8z" fill="#3d3e40" stroke="#8f8f8f" strokeWidth=".8" />
  <path d="M1108 569l112 65v9l-112-65z" fill="#29292b" stroke="#bcbcbc" strokeWidth="1" />
  <path d="M1108 574l112 65 11-6v-7" stroke="#c6c6c6" strokeWidth="1" />
  <path d="M1220 634l11-7v9l-11 7z" fill="#707072" />
  <path d="M1115 574l4-8 5 1 2 8z" fill="#a03a44" />
  <g fill="#8f9599" stroke="#cfcfcf" strokeWidth=".7"><circle cx="1119" cy="565" r="3" /><circle cx="1123" cy="561" r="2" /><circle cx="1113" cy="567" r="2" /><circle cx="1139" cy="576" r="4" /><circle cx="1136" cy="572" r="2" /></g>
  <Riser x={1155} top={525} bottom={594} c="#d3303d" />
  <Riser x={1169} top={533} bottom={601} c="#3e1c78" />
  <Riser x={1183} top={541} bottom={609} c="#d3303d" />
  <Riser x={1197} top={549} bottom={617} c="#5a2390" />
  <Riser x={1209} top={556} bottom={623} c="#d3303d" />
  <path d="M1219 562v67" stroke="#e0505c" strokeWidth="3" />
  <g fill="#8f9599" stroke="#cfcfcf" strokeWidth=".7"><circle cx="1219" cy="562" r="2" /><circle cx="1217" cy="567" r="2" /><circle cx="1219" cy="573" r="3" /></g>
  <path d="M1160 576l8 5M1188 592l9 4" stroke="#8b2fb0" strokeWidth="3" />
  {/* user coordinate system */}
  <path d="M541 611v-37" stroke="#3a63b5" strokeWidth="4" />
  <path d="M543 610l31-17" stroke="#3c9146" strokeWidth="4" />
  <path d="M541 611l33 18" stroke="#e07f87" strokeWidth="4" />
  <g strokeWidth="1.200"><path d="M540 560h10l-10 12h10" stroke="#3a63b5" /><path d="M570 579l6 5M577 578l-3 10" stroke="#3c9146" /><path d="M572 617l10 5M580 615l-5 10" stroke="#c75862" /></g>
</svg>

const ViewCube = () => <CubeArea width="130" height="115" viewBox="1415 215 130 115" fontFamily="Open Sans, sans-serif" fontWeight="700" textAnchor="middle">
  <ellipse cx="1479" cy="285" rx="52" ry="31" fill="none" stroke="#303030" strokeWidth="13" />
  <g fill="#b5b5b5" fontSize="15">
    <text x="1435" y="312" transform="rotate(12 1435 307)">S</text>
    <text x="1521" y="312">O</text>
    <text x="1442" y="262" fontSize="12" transform="rotate(-20 1442 257)">W</text>
    <text x="1515" y="262" fontSize="12" transform="rotate(20 1515 257)">N</text>
  </g>
  <path d="M1478 225l33 16-32 17-32-17z" fill="#c3c3c3" />
  <path d="M1447 241l32 17 1 38-32-21z" fill="#a6a6a6" />
  <path d="M1479 258l32-17-2 36-29 19z" fill="#b4b4b4" />
  <path d="M1447 241l32 17 32-17M1479 258l1 38" stroke="#555" strokeWidth=".7" fill="none" />
  <g fill="#303032" fontSize="9">
    <text x="1480" y="244" transform="rotate(27 1480 241)">OBEN</text>
    <text x="1463" y="273" fontSize="8" transform="rotate(27 1463 270)">VORNE</text>
    <text x="1495" y="272" fontSize="8" transform="rotate(-27 1495 269)">RECHTS</text>
  </g>
</CubeArea>

const Navigation = () => <NavBar aria-label="Navigation">
  <svg width="30" height="195" viewBox="0 0 30 195" fill="none" stroke="#2b2b2b" strokeWidth="1.200">
    <circle cx="24" cy="5" r="3" /><path d="M22 3l4 4M26 3l-4 4" />
    <path d="M15 18h10v10a10 10 0 11-10-10z" /><circle cx="15" cy="27" r="6.500" /><circle cx="15" cy="27" r="3.500" />
    <path d="M13 45h5l-2.500 3zM13 109h5l-2.500 3zM13 145h5l-2.500 3z" fill="#2b2b2b" stroke="none" />
    <path d="M2 51.500h26M2 151.500h26" stroke="#777" />
    <path d="M10 76L5 68c-1-2 1-3 3-1l2 3-2-9c0-2 2-2 3 0l1 6 1-8c0-2 2-2 2 0l1 8 2-7c1-2 3-1 2 1l-1 8 3-5c1-1 3 0 2 2l-4 8c-1 3-2 4-4 4h-4c-2 0-3-1-4-2z" />
    <path d="M5 84l12 13M19 84L5 97M4 88v-5h5M15 83h5v5M4 93v5h5" /><circle cx="19" cy="97" r="4.500" /><path d="M22 101l4 4" strokeWidth="2.200" />
    <ellipse cx="15" cy="128" rx="11" ry="4.500" /><path d="M13 138v-16h-3l5-6 5 6h-3v16z" /><path d="M9 130l-5 3 6 3z" fill="#2b2b2b" />
    <path d="M5 156.500h5v5H5zM12.500 156.500h5v5h-5zM20 156.500h5v5h-5zM5 164.500h14v13H5z" /><path d="M9 167v8l6-4z" fill="#2b2b2b" />
    <circle cx="24" cy="190" r="3" /><path d="M22.500 189h3M22.500 191h3" strokeWidth=".8" />
  </svg>
</NavBar>

const
  Console = styled.div`
    display: grid;
    grid-template-columns: 23px minmax(0, 1fr);
    height: 48px;
    border-top: 2px solid #50565f;
    background: #2c3240;
    overflow: hidden;
    font: 11px/14px "DejaVu Sans Mono", monospace;
    color: #fff;
  `,
  ConsoleSide = styled.div`
    display: flex;
    flex-direction: column;
    align-items: center;
    gap: 5px;
    padding: 3px 2px 0 0;
  `,
  DotGrip = styled.span`
    flex: none;
    width: 13px;
    height: 5px;
    background: repeating-linear-gradient(90deg, #d5d8de 0 1px, transparent 1px 2px);
  `,
  History = styled.p`
    height: 33px;
    margin: 0;
    padding: 4px 1px 0;
    background: #697884;
    white-space: pre;
    overflow: hidden;
  `,
  Prompt = styled.label`
    display: flex;
    align-items: center;
    gap: 3px;
    height: 20px;
    padding-left: 3px;
    background: #fff;
    border-top: 1px solid #15191f;
  `,
  PromptInput = styled.input`
    flex: 1;
    min-width: 0;
    height: 18px;
    padding: 0;
    border: 0;
    outline: 0;
    background: none;
    color: #555;
    font-style: italic;
    &::placeholder { color: #555; opacity: 1; }
  `

const Drawing = () => <Center>
  <Viewport>
    <Scene />
    <ViewCube />
    <UcsButton>Unbenannt<Caret $color="#6a6b73" /></UcsButton>
    <Navigation />
  </Viewport>
  <Console>
    <ConsoleSide>
      <DotGrip />
      <Icon name="close" size={11} />
      <IconButton $w={14} $h={18} aria-label="Anpassen"><Icon name="wrench" size={13} /></IconButton>
    </ConsoleSide>
    <div>
      <History>{"Option eingeben [?/Machen/SEtzen/Neu/Umbenennen/EIN/AUs/FArbe/Ltyp/LStärke/TRansparenz/MATerial/Plot/Frieren/Tauen/SPerren/ENtsperren/STatus/Beschreibung/ABstimmen/Xref]:\nBefehl: _-view Option eingeben [?/LÖschen/Orthogonal/Holen/Speichern/Einstellungen/Fenster]: _seiso"}</History>
      <Prompt>
        <Icon name="terminal" size={14} /><Caret $color="#333" />
        <PromptInput aria-label="Befehl" placeholder="Befehl eingeben" />
      </Prompt>
    </div>
  </Console>
</Center>

/* ---------- modelling palette ---------- */

const
  Side = styled.aside`
    display: flex;
    flex-direction: column;
    background: #4f566c;
    border-left: 1px solid #5b6276;
  `,
  SideTitle = styled.h2`
    display: flex;
    align-items: center;
    gap: 4px;
    height: 30px;
    margin: 0;
    padding: 2px 8px 0;
    background: #232c36;
    font-size: 12px;
    font-weight: 400;
  `,
  SideTabs = styled.nav`
    display: grid;
    grid-template-columns: repeat(4, 1fr) 47px;
    height: 31px;
    background: #232c36;
  `,
  SideTab = styled.button`
    display: flex;
    align-items: center;
    justify-content: center;
    ${p => p.$on && `background: #4f566c; border-top: 2px solid ${R};`}
  `,
  SideHeading = styled.h3`
    height: 22px;
    margin: 0;
    padding: 2px 0 0 9px;
    font-size: 11px;
    font-weight: 400;
    line-height: 20px;
  `,
  SubTabs = styled.nav`
    display: flex;
    height: 26px;
    padding-left: 9px;
  `,
  SubTab = styled(SideTab)`
    width: 28px;
    border-top: 2px solid transparent;
    ${p => p.$on && "background: #37404b; border-top: 2px solid #dc6570;"}
  `,
  Sheet = styled.div`
    flex: 1;
    margin: 0 11px 0 9px;
    padding-top: 2px;
    background: #37404b;
  `,
  Caption = styled.h4`
    height: 18px;
    margin: 0;
    padding-left: 6px;
    font-size: 11px;
    font-weight: 400;
    line-height: 18px;
  `,
  IconGrid = styled.div`
    display: grid;
    grid-template-columns: repeat(7, 26px);
    grid-auto-rows: 26px;
  `,
  ViewButton = styled.button`
    position: relative;
    display: flex;
    align-items: center;
    justify-content: center;
    ${p => p.$hover && "background: #2c333e;"}
  `,
  Pointer = styled.svg`
    position: absolute;
    left: 8px;
    top: 17px;
    z-index: 1;
  `,
  Rule = styled.hr`
    height: 2px;
    margin: 2px 1px;
    border: 0;
    background: #56606d;
  `,
  Item = styled.button`
    display: flex;
    align-items: center;
    gap: 4px;
    width: 100%;
    height: 22px;
    padding: 0 8px 0 6px;
    & > ${Caret} { margin-left: auto; }
  `,
  Hide = styled.div`
    display: flex;
    align-items: center;
    height: 43px;
    margin: 0 6px;
    padding: 0 7px 0 12px;
    background: #3c4354;
    & > span { flex: 1; padding-left: 4px; }
    & svg { margin: 0 2px; }
  `,
  Step = styled.button`
    width: 16px;
    font-size: 15px;
  `,
  SideFoot = styled.div`
    display: flex;
    align-items: center;
    gap: 6px;
    height: 23px;
    padding: 6px 11px 0 9px;
    & > :nth-child(5) { margin-left: auto; }
  `

const FootButton = ({icon, label}) => <IconButton $w={16} $h={16} aria-label={label}><Icon name={icon} size={16} /></IconButton>

const ItemRow = ({icon, children, up, plain}) => <Item>
  <Icon name={icon} />{children}
  {!plain && <Caret $size={4} $up={up} />}
</Item>

const RightDock = () => <Side>
  <SideTitle><Icon name="radiator" size={14} />Heizung, 3D - Modellplanung</SideTitle>
  <SideTabs>
    {["burger", "edit", "calc", "page", "dots"].map((i, n) =>
      <SideTab key={i} $on={n === 4} aria-label={i}><Icon name={i} size={24} /></SideTab>)}
  </SideTabs>
  <SideHeading>Schnitte / Ansichten</SideHeading>
  <SubTabs>
    {["view", "viewGear", "deviceEdit", "wrench", "ruler", "gear"].map((i, n) =>
      <SubTab key={i} $on={n === 0} aria-label={i}><Icon name={i} /></SubTab>)}
  </SubTabs>
  <Sheet>
    <Caption>Ansichten</Caption>
    <IconGrid>
      {["cubeTop", "cubeLeft", "cubeRight", "cubeFront", "cubeBack", "overlap", "server", "isoSW", "isoSE", "isoNE", "isoNW", "axisGlobe", "axisView", "globeProps"].map(i =>
        <ViewButton key={i} $hover={i === "isoSE"} aria-label={i}>
          <Icon name={i} />
          {i === "isoSE" && <Pointer width="13" height="20" viewBox="0 0 13 20"><path d="M1 1l11 11H8l3 6-3 1-3-6-4 3z" fill="#fff" stroke="#222" strokeWidth=".8" /></Pointer>}
        </ViewButton>)}
    </IconGrid>
    <Rule />
    <Caption>Ansichtsfenster</Caption>
    <IconGrid>
      {["view", "viewGrid", "viewBlue", "orbit"].map(i => <ViewButton key={i} aria-label={i}><Icon name={i} /></ViewButton>)}
    </IconGrid>
    <Rule />
    <ItemRow icon="saved">Gespeicherte Ansichten</ItemRow>
    <ItemRow icon="section">3D-Schnitte/Ansichten</ItemRow>
    <Rule />
    <Caption>Temporäre Schnitte</Caption>
    <ItemRow icon="vsec">{"Vertikalschnitt <"}</ItemRow>
    <ItemRow icon="hsec">{"Horizontalschnitt <"}</ItemRow>
    <ItemRow icon="secOff" plain>Schnittebenen ausschalten</ItemRow>
    <Rule />
    <ItemRow icon="persp">{"Perspektive <"}</ItemRow>
    <ItemRow icon="isolate" up>Freistellen/Ausblenden</ItemRow>
    <Hide>
      <Step>«</Step><Step>‹</Step>
      <Icon name="cyanBulb" />
      <span>ausblenden...</span>
      <Step>›</Step><Step>»</Step>
    </Hide>
  </Sheet>
  <SideFoot>
    <FootButton icon="panes" label="Fenster" />
    <FootButton icon="layFlash" label="Layer" />
    <FootButton icon="funnel" label="Filter" />
    <FootButton icon="grid" label="Raster" />
    <FootButton icon="gear" label="Optionen" />
    <FootButton icon="help" label="Hilfe" />
    <FootButton icon="info" label="Info" />
  </SideFoot>
</Side>

/* ---------- player ---------- */

const
  Player = styled.footer`
    display: flex;
    align-items: center;
    height: 52px;
    padding-left: 5px;
    background: #fff;
    color: #1c1c1c;
  `,
  Play = styled.button`
    display: flex;
    align-items: center;
    justify-content: center;
    width: 42px;
    height: 42px;
    border-radius: 50%;
    background: #153c47;
  `,
  Time = styled.time`
    width: 76px;
    margin-left: 19px;
    font-family: "Open Sans", sans-serif;
    font-size: 9px;
  `,
  Seek = styled.input`
    appearance: none;
    flex: 1;
    height: 14px;
    margin: 0 89px 0 0;
    background: none;
    &::-webkit-slider-runnable-track {
      height: 4px;
      background: linear-gradient(90deg, #153c47 96%, #d4d4d4 96%);
    }
    &::-webkit-slider-thumb {
      appearance: none;
      width: 13px;
      height: 13px;
      margin-top: -5px;
      border-radius: 50%;
      background: #153c47;
    }
  `

const PlayerButton = ({label, children}) => <IconButton $w={46} $h={42} aria-label={label}>
  <svg width="28" height="24" viewBox="0 0 28 24" fill="none" stroke="#161616" strokeWidth="1.500">{children}</svg>
</IconButton>

const VideoBar = () => <Player>
  <Play aria-label="Abspielen"><svg width="42" height="42" viewBox="0 0 42 42"><path d="M13 11v21l20-11z" fill="#fff" /></svg></Play>
  <Time>03:33 / 03:41</Time>
  <Seek type="range" min="0" max="221" defaultValue="214" aria-label="Position" />
  <PlayerButton label="Einstellungen">
    <path d="M11.500 2h3l.6 2.600 2 .8 2.300-1.400 2.100 2.100L20 8.400l.9 2 2.600.6v3l-2.600.6-.9 2 1.500 2.300-2.100 2.100-2.300-1.400-2 .8-.6 2.600h-3l-.6-2.600-2-.8L6.600 21l-2.100-2.100L6 16.600l-.9-2-2.600-.6v-3l2.600-.6.9-2-1.500-2.300 2.100-2.100 2.300 1.400 2-.8z" />
    <path d="M10 13.500a3.500 3.500 0 103-4.500" />
  </PlayerButton>
  <PlayerButton label="Geschwindigkeit">
    <path d="M17.500 6.500v12l9-6z" /><path d="M10 6.500v12l5.500-4M10 6.500l5.500 4" strokeWidth="1.200" /><path d="M2 6.500v12l5.500-4M2 6.500l5.500 4" strokeWidth=".7" />
  </PlayerButton>
  <PlayerButton label="Lautstärke">
    <path d="M2.500 9.500v6h4l9 6.500V3l-9 6.500zM6.500 9v7" /><path d="M18 8.500a4.500 4.500 0 010 8M21 5.500a8.500 8.500 0 010 14" />
  </PlayerButton>
  <PlayerButton label="Vollbild beenden">
    <path d="M24 3l-8 8M16 5v6h6M5 22l7-7M6 14h6.500v6.500" />
  </PlayerButton>
</Player>

const App = () => <Shell>
  <Global />
  <Top />
  <RibbonBar />
  <Docs>
    <Doc>Start</Doc>
    <Doc $on>3.3*<IconButton $w={12} aria-label="Schließen"><Icon name="close" size={11} /></IconButton></Doc>
    <NewDoc aria-label="Neue Zeichnung">+</NewDoc>
  </Docs>
  <Main>
    <LeftDock />
    <Drawing />
    <RightDock />
  </Main>
  <VideoBar />
</Shell>

export default App
